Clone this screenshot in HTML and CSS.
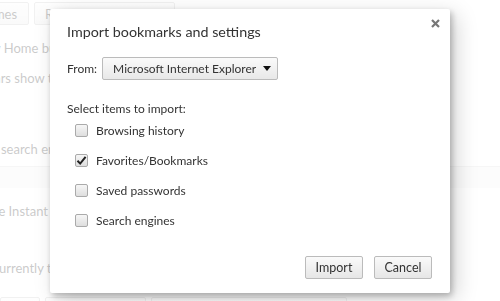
FILE: index.html
```html
<!DOCTYPE html>
<html lang="en">
  <head>
    <meta charset="UTF-8" />
    <meta name="viewport" content="width=device-width, initial-scale=1.0" />
    <title>Import bookmarks and settings</title>
    <link rel="stylesheet" href="styles.css">
  </head>
  <body>
    <div class="page">
      <div class="theme-row">
        <button class="page-btn btn-themes">Get themes</button>
        <button class="page-btn btn-reset">Reset to default theme</button>
      </div>
      <p class="line line-home">Show Home button</p>
      <p class="line line-bar">Toolbars show the bookmarks bar</p>
      <p class="line line-search">Set which search engine is used</p>
      <div class="band"></div>
      <p class="line line-instant">Enable Instant for faster searching</p>
      <p class="line line-users">You are currently the only user</p>
      <div class="bottom-row">
        <span class="page-btn b1"></span>
        <span class="page-btn b2"></span>
        <span class="page-btn b3"></span>
      </div>
    </div>

    <div class="overlay"></div>

    <div class="dialog">
      <button class="close" title="Close">
        <svg width="9" height="9" viewBox="0 0 9 9">
          <path d="M1 1 L8 8 M8 1 L1 8" stroke="#777" stroke-width="2.2" />
        </svg>
      </button>
      <h1 class="title">Import bookmarks and settings</h1>

      <div class="from-row">
        <span>From:</span>
        <div class="select">
          <span>Microsoft Internet Explorer</span>
          <span class="arrow"></span>
        </div>
      </div>

      <p class="section">Select items to import:</p>
      <ul class="items">
        <li><span class="box"></span>Browsing history</li>
        <li>
          <span class="box">
            <svg width="11" height="11" viewBox="0 0 11 11">
              <path d="M1.5 5.8 L4.2 8.6 L9.6 1.8" fill="none" stroke="#222" stroke-width="2" />
            </svg>
          </span>
          Favorites/Bookmarks
        </li>
        <li><span class="box"></span>Saved passwords</li>
        <li><span class="box"></span>Search engines</li>
      </ul>

      <div class="actions">
        <button class="btn">Import</button>
        <button class="btn">Cancel</button>
      </div>
    </div>
  </body>
</html>
```

FILE: styles.css
```css
html,
body {
  overflow: hidden;
  height: 301px;
}
body {
  margin: 0;
  font-family: Lato, "Noto Sans", sans-serif;
  font-size: 12px;
  color: #333;
  background: #fff;
}
.page {
  padding-top: 2px;
}
.theme-row {
  display: flex;
  gap: 5px;
  margin-left: -61px;
}
.page-btn {
  display: block;
  box-sizing: border-box;
  border: 1px solid #ccc;
  border-radius: 2px;
  background: linear-gradient(180deg, #fafafa, #ececec);
  color: #444;
  font-family: inherit;
  font-size: 13px;
  height: 23px;
  padding: 0 10px;
  white-space: nowrap;
  overflow: hidden;
}
.btn-themes {
  width: 90px;
}
.btn-reset {
  width: 141px;
  text-align: left;
}
.line {
  margin: 0;
  font-size: 13px;
  line-height: 16px;
  color: #444;
  white-space: nowrap;
}
.line-home {
  margin: 15px 0 0 -31px;
}
.line-bar {
  margin: 14px 0 0 -37px;
}
.line-search {
  margin: 55px 0 0 -58px;
}
.band {
  height: 22px;
  margin-top: 9px;
  box-sizing: border-box;
  border-top: 1px solid #ddd;
  background: #f4f4f4;
}
.line-instant {
  margin: 15px 0 0 -33px;
}
.line-users {
  margin: 41px 0 0 -53px;
}
/* only the top edge of this row is visible */
.bottom-row {
  display: flex;
  gap: 5px;
  margin-top: 21px;
  height: 4px;
  overflow: hidden;
}
.b1 {
  width: 40px;
}
.b2 {
  width: 101px;
}
.b3 {
  width: 196px;
}
.overlay {
  position: fixed;
  inset: 0;
  background: rgba(255, 255, 255, 0.72);
}

.dialog {
  position: absolute;
  left: 50px;
  top: 9px;
  width: 400px;
  height: 284px;
  box-sizing: border-box;
  padding: 14px 17px 0;
  background: #fff;
  border-radius: 2px;
  box-shadow: 2px 3px 6px rgba(0, 0, 0, 0.25), 6px 6px 22px rgba(0, 0, 0, 0.18);
  display: flex;
  flex-direction: column;
}
.close {
  position: absolute;
  top: 10px;
  right: 10px;
  border: none;
  background: none;
  padding: 0;
  width: 9px;
  height: 9px;
  display: flex;
}
.title {
  margin: 0;
  font-size: 14.3px;
  line-height: 18px;
  font-weight: normal;
  color: #333;
}
.from-row {
  display: flex;
  align-items: center;
  gap: 5px;
  margin-top: 16px;
}
.select {
  display: flex;
  align-items: center;
  justify-content: space-between;
  width: 176px;
  height: 23px;
  box-sizing: border-box;
  padding: 0 6px 0 10px;
  border: 1px solid #bbb;
  border-radius: 2px;
  background: linear-gradient(180deg, #fafafa, #e8e8e8);
  color: #333;
  white-space: nowrap;
}
.arrow {
  width: 0;
  height: 0;
  border-left: 4px solid transparent;
  border-right: 4px solid transparent;
  border-top: 5px solid #111;
}
.section {
  margin: 21px 0 0;
  line-height: 15px;
}
.items {
  list-style: none;
  margin: 6px 0 0;
  padding: 0 0 0 8px;
  display: flex;
  flex-direction: column;
  gap: 13px;
}
.items li {
  display: flex;
  align-items: center;
  gap: 8px;
  height: 17px;
}
.box {
  width: 13px;
  height: 13px;
  box-sizing: border-box;
  border: 1px solid #aaa;
  border-radius: 2px;
  background: linear-gradient(180deg, #f6f6f6, #dedede);
  display: flex;
  align-items: center;
  justify-content: center;
}
.actions {
  margin-top: auto;
  margin-bottom: 14px;
  margin-right: 1px;
  display: flex;
  justify-content: flex-end;
  gap: 11px;
}
.btn {
  width: 58px;
  height: 23px;
  border: 1px solid #bbb;
  border-radius: 2px;
  background: linear-gradient(180deg, #fafafa, #e6e6e6);
  font-family: inherit;
  font-size: 12.5px;
  color: #333;
  padding: 0;
}
```
